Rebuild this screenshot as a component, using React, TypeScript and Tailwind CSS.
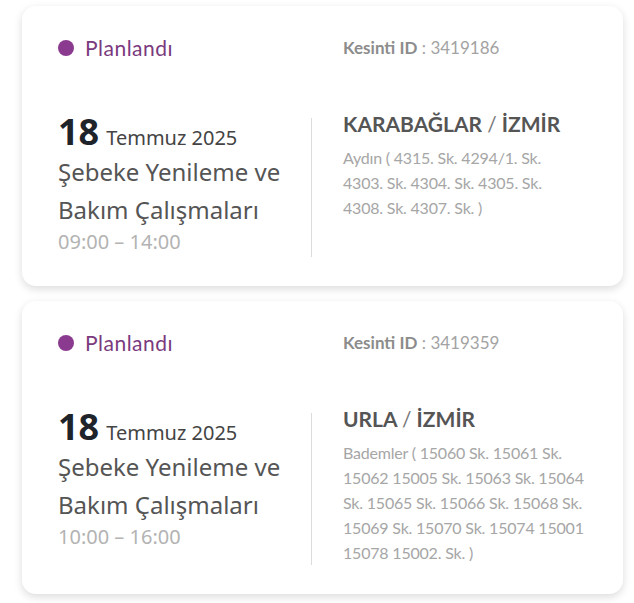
import React from "react"

type Outage = {
  id: string
  day: string
  month: string
  time: string
  district: string
  city: string
  address: string[]
}

// address lines are kept as in the source layout
const outages: Outage[] = [
  {
    id: "3419186",
    day: "18",
    month: "Temmuz 2025",
    time: "09:00 – 14:00",
    district: "KARABAĞLAR",
    city: "İZMİR",
    address: ["Aydın ( 4315. Sk. 4294/1. Sk.", "4303. Sk. 4304. Sk. 4305. Sk.", "4308. Sk. 4307. Sk. )"],
  },
  {
    id: "3419359",
    day: "18",
    month: "Temmuz 2025",
    time: "10:00 – 16:00",
    district: "URLA",
    city: "İZMİR",
    address: [
      "Bademler ( 15060 Sk. 15061 Sk.",
      "15062 15005 Sk. 15063 Sk. 15064",
      "Sk. 15065 Sk. 15066 Sk. 15068 Sk.",
      "15069 Sk. 15070 Sk. 15074 15001",
      "15078 15002. Sk. )",
    ],
  },
]

const geo = "font-['Lato',sans-serif]"
const ubu = "font-['Noto_Sans',sans-serif]"

function OutageCard({ o }: { o: Outage }) {
  return (
    <div className="w-[601px] ml-[22px] bg-white rounded-[14px] shadow-[0_3px_9px_rgba(0,0,0,0.14)] pl-[36px] pr-[40px] pt-[28px] pb-[29px]">
      <div className="grid grid-cols-[254px_1fr]">
        {/* status + id */}
        <div className={`flex items-center gap-[11px] h-[28px] ${geo}`}>
          <span className="w-[16px] h-[16px] rounded-full bg-[#8b3b8f]"></span>
          <span className="text-[21px] tracking-[0.5px] text-[#7a3a7d]">Planlandı</span>
        </div>
        <div className={`pl-[31px] h-[28px] flex items-center text-[17px] text-[#a3a3a3] ${geo}`}>
          <span className="font-bold text-[#8c8c8c]">Kesinti ID</span>
          <span>&nbsp;: {o.id}</span>
        </div>

        {/* main */}
        <div className={`mt-[56px] border-r border-[#dcdcdc] pb-[2px] ${ubu}`}>
          <div className="text-[36px] leading-[28px] font-bold text-[#1f242b]">
            {o.day}
            <span className="text-[20px] leading-none font-normal text-[#444] ml-[7px]">{o.month}</span>
          </div>
          <p className="mt-[5px] text-[24px] leading-[38px] text-[#555]">
            Şebeke Yenileme ve
            <br />
            Bakım Çalışmaları
          </p>
          <p className="text-[20px] leading-[26px] text-[#b3b3b3]">{o.time}</p>
        </div>
        <div className={`mt-[48px] pl-[31px] ${geo}`}>
          <h3 className="text-[21px] leading-[28px] font-bold text-[#555]">
            {o.district} <span className="font-normal text-[#777]">/</span> {o.city}
          </h3>
          <div className="mt-[7px] text-[16px] leading-[25px] tracking-[-0.2px] text-[#a6a6a6] whitespace-nowrap">
            {o.address.map((line) => (
              <p key={line}>{line}</p>
            ))}
          </div>
        </div>
      </div>
    </div>
  )
}

export default function App() {
  return (
    <div className="min-h-screen bg-white pt-[6px] pb-[10px]">
      <div className="flex flex-col gap-[15px]">
        {outages.map((o) => (
          <OutageCard key={o.id} o={o} />
        ))}
      </div>
    </div>
  )
}
